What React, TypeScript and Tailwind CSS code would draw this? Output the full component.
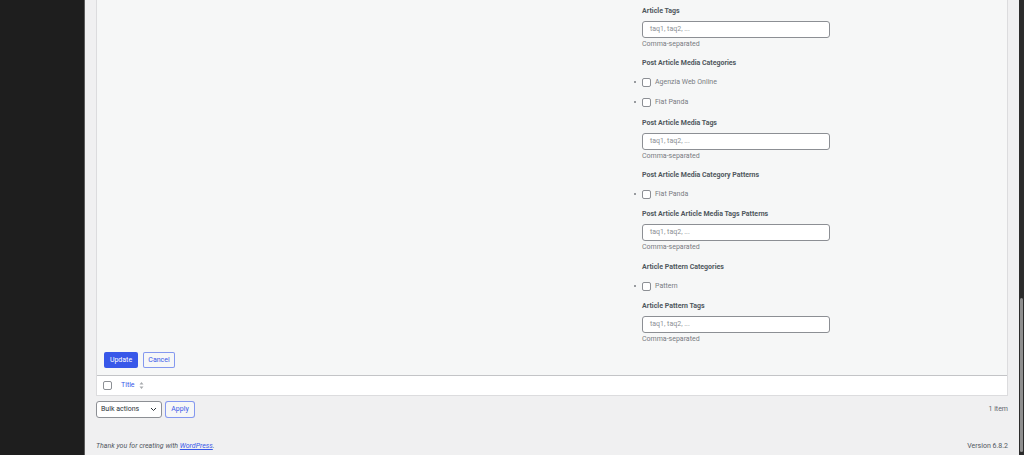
import React from 'react';

const font = { fontFamily: 'Roboto, "Noto Sans", sans-serif' };

function Label({ children, top }: { children: React.ReactNode; top: string }) {
  return <div className={`${top} h-[10px] text-[7px] leading-[10px] font-bold text-[#50575e]`}>{children}</div>;
}

function TagInput() {
  return (
    <>
      <div className="mt-[5px] h-[17px] w-[188px] rounded-[3px] border border-[#8c8f94] bg-white px-[7px] text-[7px] leading-[15px] text-[#8c8f94]">
        taq1, taq2, ...
      </div>
      <div className="mt-px h-[10px] text-[7px] leading-[10px] text-[#787c82]">Comma-separated</div>
    </>
  );
}

function CheckItem({ label }: { label: string }) {
  return (
    <li className="relative flex h-[20px] items-center">
      <span className="absolute left-[-8px] top-[9px] h-[2px] w-[2px] rounded-full bg-[#787c82]" />
      <span className="h-[9px] w-[9px] rounded-[2px] border border-[#8c8f94] bg-white" />
      <span className="ml-[4px] text-[7px] text-[#787c82]">{label}</span>
    </li>
  );
}

function CheckList({ items }: { items: string[] }) {
  return (
    <ul className="mt-[4px]">
      {items.map((i) => (
        <CheckItem key={i} label={i} />
      ))}
    </ul>
  );
}

export default function App() {
  return (
    <div className="flex h-[455px] w-[1024px] overflow-hidden" style={font}>
      <div className="w-[85px] shrink-0 border-r border-[#5c5c5c] bg-[#1e1e1e]" />
      <div className="flex min-w-0 flex-1 flex-col bg-[#f0f0f1] px-[11px]">
        <div className="border-x border-b border-[#dcdcde]">
          <div className="bg-[#f6f7f7] pt-[6px] pb-[7px]">
            <div className="pl-[545px]">
              <Label top="mt-0">Article Tags</Label>
              <TagInput />
              <Label top="mt-[9px]">Post Article Media Categories</Label>
              <CheckList items={['Agenzia Web Online', 'Fiat Panda']} />
              <Label top="mt-[6px]">Post Article Media Tags</Label>
              <TagInput />
              <Label top="mt-[9px]">Post Article Media Category Patterns</Label>
              <CheckList items={['Fiat Panda']} />
              <Label top="mt-[5px]">Post Article Article Media Tags Patterns</Label>
              <TagInput />
              <Label top="mt-[10px]">Article Pattern Categories</Label>
              <CheckList items={['Pattern']} />
              <Label top="mt-[5px]">Article Pattern Tags</Label>
              <TagInput />
            </div>
            <div className="mt-[8px] flex gap-[5px] pl-[7px]">
              <button className="h-[16px] w-[34px] rounded-[2px] bg-[#3858e9] text-[7px] text-white">Update</button>
              <button className="h-[16px] w-[32px] rounded-[2px] border border-[#3858e9]/60 bg-[#f6f7f7] text-[7px] text-[#3858e9]">
                Cancel
              </button>
            </div>
          </div>
          <div className="flex h-[20px] items-center border-t border-[#c3c4c7] bg-white pl-[6px]">
            <span className="h-[9px] w-[9px] rounded-[2px] border border-[#8c8f94] bg-white" />
            <span className="ml-[9px] text-[7px] text-[#3858e9]">Title</span>
            <svg className="ml-[4px]" width="5" height="9" viewBox="0 0 5 9">
              <path d="M0.5 3.5 L2.5 1 L4.5 3.5 Z M0.5 5.5 L2.5 8 L4.5 5.5 Z" fill="#a7aaad" />
            </svg>
          </div>
        </div>
        <div className="mt-[5px] flex items-center">
          <div className="flex h-[17px] w-[66px] items-center justify-between rounded-[3px] border border-[#8c8f94] bg-white px-[4px] text-[7px] text-[#2c3338]">
            <span>Bulk actions</span>
            <svg width="7" height="5" viewBox="0 0 7 5">
              <path d="M1 1 L3.5 3.5 L6 1" fill="none" stroke="#2c3338" strokeWidth="1" />
            </svg>
          </div>
          <button className="ml-[3px] h-[17px] w-[30px] rounded-[3px] border border-[#3858e9]/60 bg-[#f6f7f7] text-[7px] text-[#3858e9]">
            Apply
          </button>
          <span className="ml-auto text-[7px] text-[#646970]">1 item</span>
        </div>
        <div className="mt-auto mb-[4px] flex items-center justify-between text-[7px] text-[#50575e]">
          <span className="italic">
            Thank you for creating with <span className="text-[#3858e9] underline">WordPress</span>.
          </span>
          <span>Version 6.8.2</span>
        </div>
      </div>
      <div className="relative w-[5px] shrink-0 bg-[#2b2b2b]">
        <div className="absolute left-px top-[298px] h-[154px] w-[3px] rounded-sm bg-[#8f8f8f]" />
      </div>
    </div>
  );
}
